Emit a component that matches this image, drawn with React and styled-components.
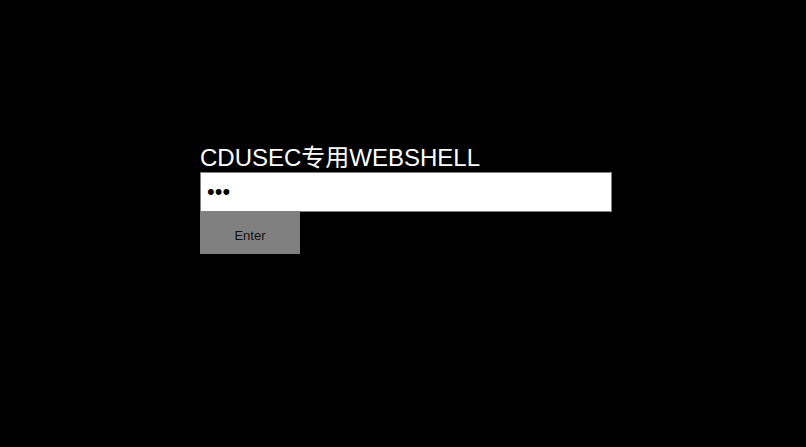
import React, { useState } from "react";
import styled, { createGlobalStyle } from "styled-components";

const GlobalStyle = createGlobalStyle`
  html, body {
    margin: 0;
    padding: 0;
    background: #000;
  }
  body {
    font-family: "Liberation Sans", Arial, "Noto Sans CJK SC", sans-serif;
  }
`;

const Page = styled.div`
  width: 100%;
  height: 100vh;
  background: #000;
  padding: 144px 0 0 200px;
  box-sizing: border-box;
`;

const LoginForm = styled.form`
  display: flex;
  flex-direction: column;
  align-items: flex-start;
  width: 412px;
`;

const Title = styled.div`
  color: #fff;
  font-size: 24px;
  line-height: 27px;
  margin-bottom: 1px;
  font-family: "Liberation Sans", Arial, "Noto Sans CJK SC", sans-serif;
`;

const PassInput = styled.input`
  width: 412px;
  height: 40px;
  box-sizing: border-box;
  border: 1px solid #808080;
  background: #fff;
  color: #000;
  padding: 0 6px;
  font-size: 22px;
  font-family: "Liberation Sans", Arial, sans-serif;
  outline: none;
`;

const EnterButton = styled.button`
  width: 100px;
  height: 42px;
  border: none;
  background: #808080;
  color: #111;
  font-size: 13px;
  font-family: "Liberation Sans", Arial, sans-serif;
  padding: 4px 0 0;
  cursor: pointer;
`;

const App = () => {
  const [password, setPassword] = useState("abc");

  return (
    <>
      <GlobalStyle />
      <Page>
        <LoginForm onSubmit={(e) => e.preventDefault()}>
          <Title>CDUSEC专用WEBSHELL</Title>
          <PassInput
            type="password"
            value={password}
            onChange={(e) => setPassword(e.target.value)}
          />
          <EnterButton type="submit">Enter</EnterButton>
        </LoginForm>
      </Page>
    </>
  );
};

export default App;
